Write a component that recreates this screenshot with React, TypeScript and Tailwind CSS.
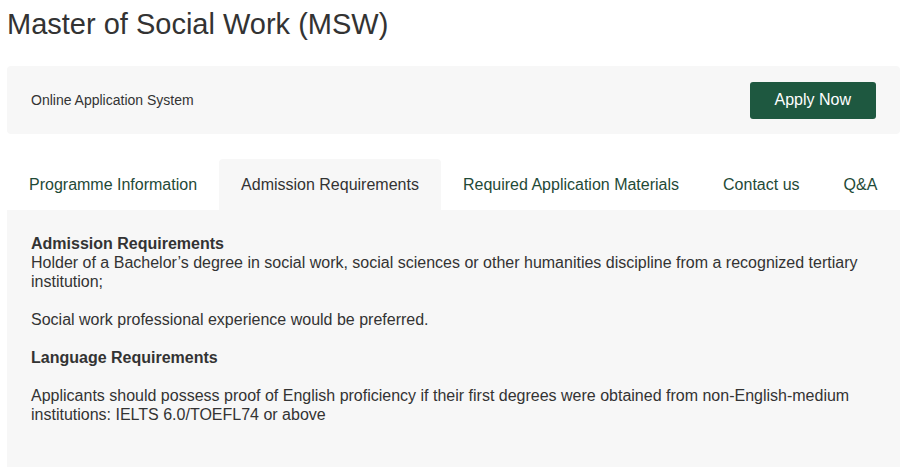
import { useState } from 'react'

const tabs = [
  'Programme Information',
  'Admission Requirements',
  'Required Application Materials',
  'Contact us',
  'Q&A',
]

export default function App() {
  const [active, setActive] = useState(1)

  return (
    <div className="min-h-screen bg-white px-[7px] text-[#333] [font-family:'Liberation_Sans',Arial,sans-serif]">
      <h1 className="pt-[8px] text-[29px] font-normal leading-[33px]">Master of Social Work (MSW)</h1>

      <div className="mt-[25px] flex h-[68px] w-[893px] items-center justify-between rounded-[4px] bg-[#f7f7f7] px-[24px]">
        <p className="text-[14px]">Online Application System</p>
        <button
          type="button"
          className="h-[37px] rounded-[3px] bg-[#1e5840] px-[25px] text-[16px] text-white"
        >
          Apply Now
        </button>
      </div>

      <ul className="mt-[25px] flex">
        {tabs.map((tab, i) => (
          <li key={tab}>
            <button
              type="button"
              onClick={() => setActive(i)}
              className={
                i === active
                  ? 'h-[51px] rounded-t-[4px] bg-[#f7f7f7] px-[22px] text-[16px] text-[#333]'
                  : 'h-[51px] px-[22px] text-[16px] text-[#1f4a37]'
              }
            >
              {tab}
            </button>
          </li>
        ))}
      </ul>

      <div className="h-[257px] w-[893px] bg-[#f7f7f7] px-[24px] pt-[24px] text-[16px] leading-[19px]">
        <p>
          <strong>Admission Requirements</strong>
          <br />
          Holder of a Bachelor’s degree in social work, social sciences or other humanities discipline from a recognized tertiary
          institution;
        </p>
        <p className="mt-[19px]">Social work professional experience would be preferred.</p>
        <p className="mt-[19px] font-bold">Language Requirements</p>
        <p className="mt-[19px]">
          Applicants should possess proof of English proficiency if their first degrees were obtained from non-English-medium
          institutions: IELTS 6.0/TOEFL74 or above
        </p>
      </div>
    </div>
  )
}
